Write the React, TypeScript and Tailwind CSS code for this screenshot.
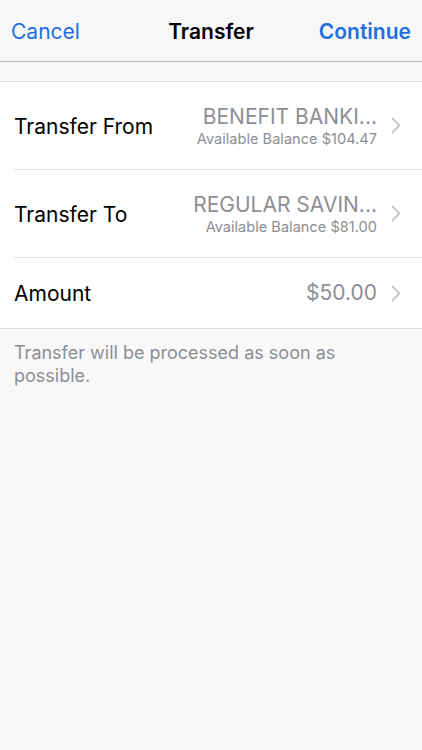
function Chevron() {
  return (
    <svg width="10" height="17" viewBox="0 0 10 17" className="shrink-0" fill="none">
      <path d="M1.5 1.5 L8.5 8.5 L1.5 15.5" stroke="#c7c7cc" strokeWidth="2" strokeLinecap="round" strokeLinejoin="round" />
    </svg>
  );
}

function Row({ label, value, sub, last }: { label: string; value: string; sub?: string; last?: boolean }) {
  return (
    <div className="pl-[14px]">
      <div
        className={
          "flex items-center justify-between pr-[21px] " +
          (sub ? "h-[88px] " : "h-[70px] ") +
          (last ? "" : "border-b border-[#e3e3e6]")
        }
      >
        <span className="pt-[2px] text-[21px] text-black">{label}</span>
        <div className="flex items-center gap-[14px]">
          <div className="flex flex-col items-end">
            <span className="text-[21px] text-[#8e8e93] leading-[26px]">{value}</span>
            {sub && <span className="text-[14.6px] text-[#8e8e93] leading-[18px]">{sub}</span>}
          </div>
          <Chevron />
        </div>
      </div>
    </div>
  );
}

export default function App() {
  return (
    <div className="min-h-[750px] bg-[#f8f8f8]" style={{ fontFamily: "Inter, 'Noto Sans', sans-serif" }}>
      <div className="relative flex h-[62px] items-center justify-between border-b border-[#b6b6b9] bg-[#f7f7f7] px-[11px] pt-[2px]">
        <span className="text-[21px] text-[#1f6fe0]">Cancel</span>
        <span className="absolute left-1/2 -translate-x-1/2 text-[21px] font-semibold text-black">Transfer</span>
        <span className="text-[21px] font-semibold text-[#1f6fe0]">Continue</span>
      </div>
      <div className="h-[19px]" />
      <div className="border-y border-[#e0e0e3] bg-white">
        <Row label="Transfer From" value="BENEFIT BANKI..." sub="Available Balance $104.47" />
        <Row label="Transfer To" value="REGULAR SAVIN..." sub="Available Balance $81.00" />
        <Row label="Amount" value="$50.00" last />
      </div>
      <p className="px-[14px] pt-[12px] text-[18px] leading-[23px] text-[#8e8e93]">
        Transfer will be processed as soon as
        <br />
        possible.
      </p>
    </div>
  );
}
